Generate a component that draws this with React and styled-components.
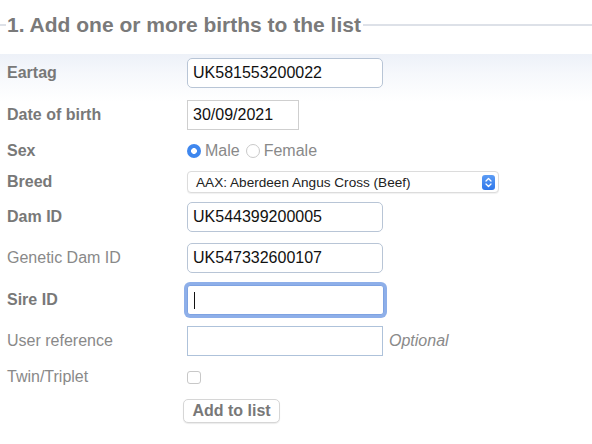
import React from "react";
import styled, { createGlobalStyle } from "styled-components";

const GlobalStyle = createGlobalStyle`
  html, body {
    margin: 0;
    padding: 0;
    background: #fff;
    font-family: "Liberation Sans", Arial, Helvetica, sans-serif;
  }
`;

const Page = styled.div`
  width: 592px;
`;

const Legend = styled.h2`
  display: flex;
  align-items: center;
  height: 50px;
  margin: 0;
  font-size: 21px;
  font-weight: bold;
  color: #7a7a7a;
  white-space: nowrap;

  &::before,
  &::after {
    content: "";
    height: 2px;
    background: #dde1e8;
  }
  &::before {
    width: 6px;
    margin-right: 1px;
  }
  &::after {
    flex: 1;
    margin-left: 2px;
  }
`;

const Form = styled.form`
  margin-top: 4px;
  background: linear-gradient(#edf1f8 0px, #f6f8fc 20px, #ffffff 48px);
`;

const Row = styled.div`
  display: grid;
  grid-template-columns: 180px auto;
  align-items: center;
  justify-content: start;
  height: ${(p) => p.$h}px;
  padding-left: 7px;
`;

const Label = styled.label`
  font-size: 16px;
  font-weight: ${(p) => (p.$bold ? "bold" : "normal")};
  color: ${(p) => (p.$bold ? "#787878" : "#898989")};
`;

const Field = styled.div`
  display: flex;
  align-items: center;
`;

const TextInput = styled.input`
  box-sizing: border-box;
  width: ${(p) => p.$w || 196}px;
  height: 30px;
  margin: 0;
  padding: 0 5px;
  border: 1px solid ${(p) => p.$border || "#b8c5d6"};
  border-radius: ${(p) => (p.$square ? 0 : 5)}px;
  font-family: "Liberation Sans", Arial, sans-serif;
  font-size: 16px;
  color: #111;
  background: #fff;
  outline: none;
`;

const Focused = styled.span`
  position: relative;
  display: inline-flex;

  input {
    border-color: #7fa3e2;
    border-radius: 3px;
    box-shadow: 0 0 0 3px #8eafe9;
  }

  &::after {
    content: "";
    position: absolute;
    left: 7px;
    top: 7px;
    width: 1px;
    height: 17px;
    background: #111;
  }
`;

const Hint = styled.span`
  margin-left: 6px;
  font-size: 16px;
  font-style: italic;
  color: #8a8a8a;
`;

const Radios = styled.div`
  display: flex;
  align-items: center;
  gap: 6px;
`;

const RadioOption = styled.label`
  display: flex;
  align-items: center;
  gap: 4px;
  font-size: 16px;
  color: #898989;
`;

const Radio = styled.input.attrs({ type: "radio" })`
  appearance: none;
  box-sizing: border-box;
  width: 14px;
  height: 14px;
  margin: 0;
  border-radius: 50%;
  border: 1px solid #c9c9c9;
  background: #fff;

  &:checked {
    border: none;
    background: radial-gradient(circle, #fff 0 2.6px, #3f87ee 3.2px);
  }
`;

const SelectBox = styled.div`
  box-sizing: border-box;
  display: flex;
  align-items: center;
  justify-content: space-between;
  width: 312px;
  height: 22px;
  padding: 0 3px 0 8px;
  border: 1px solid #dcdcdc;
  border-radius: 4px;
  background: #fff;
  box-shadow: 0 1px 1px rgba(0, 0, 0, 0.06);
  font-size: 13.6px;
  color: #222;
`;

const Stepper = styled.span`
  display: flex;
  align-items: center;
  justify-content: center;
  width: 13px;
  height: 15px;
  border-radius: 3px;
  background: linear-gradient(#5c9cf5, #2f77ea);
`;

const Checkbox = styled.input.attrs({ type: "checkbox" })`
  appearance: none;
  box-sizing: border-box;
  width: 14px;
  height: 13px;
  margin: 0;
  border: 1px solid #c8c8c8;
  border-radius: 3px;
  background: #fff;
`;

const Button = styled.button`
  box-sizing: border-box;
  width: 97px;
  height: 24px;
  margin-left: -4px;
  padding: 0;
  border: 1px solid #d6d6d6;
  border-radius: 5px;
  background: #fff;
  box-shadow: 0 1px 1px rgba(0, 0, 0, 0.08);
  font-family: "Liberation Sans", Arial, sans-serif;
  font-size: 16px;
  font-weight: bold;
  color: #787878;
`;

function StepperIcon() {
  return (
    <svg width="7" height="11" viewBox="0 0 7 11" fill="none">
      <path d="M1 4 L3.5 1.5 L6 4" stroke="#fff" strokeWidth="1.3" strokeLinecap="round" strokeLinejoin="round" />
      <path d="M1 7 L3.5 9.5 L6 7" stroke="#fff" strokeWidth="1.3" strokeLinecap="round" strokeLinejoin="round" />
    </svg>
  );
}

export default function App() {
  return (
    <Page>
      <GlobalStyle />
      <Legend>1. Add one or more births to the list</Legend>
      <Form onSubmit={(e) => e.preventDefault()}>
        <Row $h={38}>
          <Label $bold>Eartag</Label>
          <TextInput defaultValue="UK581553200022" />
        </Row>
        <Row $h={46}>
          <Label $bold>Date of birth</Label>
          <TextInput $w={112} $square $border="#cfcfcf" defaultValue="30/09/2021" />
        </Row>
        <Row $h={26}>
          <Label $bold>Sex</Label>
          <Radios>
            <RadioOption>
              <Radio name="sex" defaultChecked /> Male
            </RadioOption>
            <RadioOption>
              <Radio name="sex" /> Female
            </RadioOption>
          </Radios>
        </Row>
        <Row $h={36}>
          <Label $bold>Breed</Label>
          <SelectBox>
            <span>AAX: Aberdeen Angus Cross (Beef)</span>
            <Stepper>
              <StepperIcon />
            </Stepper>
          </SelectBox>
        </Row>
        <Row $h={34}>
          <Label $bold>Dam ID</Label>
          <TextInput defaultValue="UK544399200005" />
        </Row>
        <Row $h={48}>
          <Label>Genetic Dam ID</Label>
          <TextInput defaultValue="UK547332600107" />
        </Row>
        <Row $h={36}>
          <Label $bold>Sire ID</Label>
          <Focused>
            <TextInput $w={197} />
          </Focused>
        </Row>
        <Row $h={46}>
          <Label>User reference</Label>
          <Field>
            <TextInput $square $border="#aec2da" />
            <Hint>Optional</Hint>
          </Field>
        </Row>
        <Row $h={26}>
          <Label>Twin/Triplet</Label>
          <Checkbox />
        </Row>
        <Row $h={42}>
          <span />
          <Button type="submit">Add to list</Button>
        </Row>
      </Form>
    </Page>
  );
}
